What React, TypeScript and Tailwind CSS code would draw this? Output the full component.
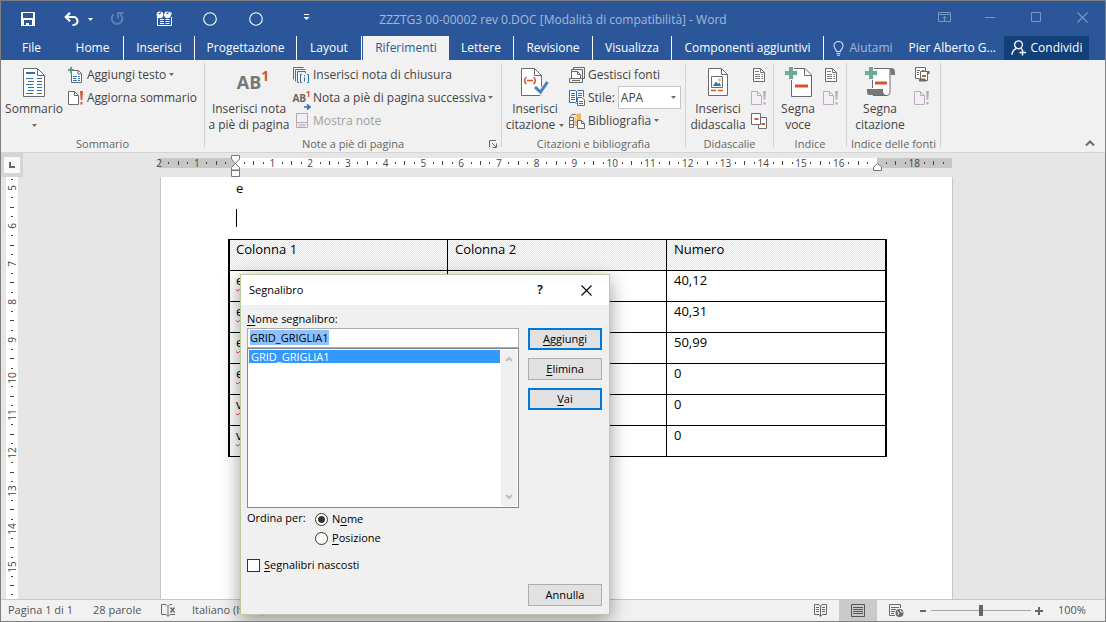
import { useEffect, useRef } from "react";
import type { ReactNode } from "react";

const GREY = "#6a6a6a";
const BLUE = "#2e6fb7";
const RED = "#d9532c";
const GREEN = "#6fa893";

function Svg({ w, h, children }: { w: number; h: number; children: ReactNode }) {
  return (
    <svg width={w} height={h} viewBox={`0 0 ${w} ${h}`} fill="none" className="block shrink-0" aria-hidden="true">
      {children}
    </svg>
  );
}

/* ---------- title bar icons ---------- */
const SaveIcon = () => (
  <Svg w={14} h={14}>
    <path fill="#fff" fillRule="evenodd" d="M0 0H14V14H0ZM2 1V6H12V1ZM3 8V13H5V11H8V13H11V8Z" />
  </Svg>
);
const UndoIcon = () => (
  <Svg w={15} h={15}>
    <path d="M2 5H9.5A3.8 3.8 0 0 1 9.500 13H8.500" stroke="#fff" strokeWidth="2.200" />
    <path d="M6 .8L1.800 5L6 9.200" stroke="#fff" strokeWidth="2.200" />
  </Svg>
);
const RedoIcon = () => (
  <Svg w={14} h={14}>
    <path d="M3.5 2.6A5.3 5.3 0 1 0 10.3 2.4" stroke="#5c81b8" strokeWidth="2" />
    <path d="M8 6.5V1H13.5" stroke="#5c81b8" strokeWidth="1.8" />
  </Svg>
);
const TableSearchIcon = () => (
  <Svg w={17} h={16}>
    <path d="M1.5 6V14.5H15.5V6" stroke="#fff" />
    <circle cx="4" cy="3.8" r="3.4" fill="#fff" />
    <circle cx="11.5" cy="3.8" r="3.4" fill="#fff" />
    <path d="M3 3L5 1.5M10.5 3L12.5 1.5" stroke="#2b579a" strokeWidth="1.2" />
    <path d="M4 8.5H8M9.5 8.5H13.5M4 10.5H8M9.5 10.5H13.5M4 12.5H8M9.5 12.5H13.5" stroke="#fff" />
    <path d="M15 1V4" stroke="#fff" />
  </Svg>
);
const CircleIcon = () => (
  <Svg w={14} h={14}>
    <circle cx="7" cy="7" r="6.3" stroke="#fff" strokeWidth="1.1" />
  </Svg>
);
const Caret = ({ color = GREY }: { color?: string }) => (
  <Svg w={5} h={3}>
    <path d="M0 0H5L2.5 3Z" fill={color} />
  </Svg>
);
const CustomizeIcon = () => (
  <Svg w={7} h={7}>
    <path d="M1 .5H6" stroke="#fff" />
    <path d="M.5 3H6.5L3.5 6Z" fill="#fff" />
  </Svg>
);
const RibbonOptionsIcon = () => (
  <Svg w={13} h={10}>
    <path d="M.5 .5H12.5V9.5H.5ZM.5 2.5H12.5M6.5 9V4.5M4.5 6.5L6.5 4.5L8.5 6.5" stroke="#7897c5" />
  </Svg>
);
const MinimizeIcon = () => (
  <Svg w={10} h={10}>
    <path d="M0 5.5H10" stroke="#7897c5" />
  </Svg>
);
const MaximizeIcon = () => (
  <Svg w={10} h={10}>
    <path d="M.5 .5H9.5V9.5H.5Z" stroke="#7897c5" />
  </Svg>
);
const CloseIcon = ({ color }: { color: string }) => (
  <Svg w={11} h={11}>
    <path d="M.5 .5L10.5 10.5M10.5 .5L.5 10.5" stroke={color} strokeWidth="1.1" />
  </Svg>
);
const BulbIcon = () => (
  <Svg w={11} h={15}>
    <path d="M3.5 10.5C3.5 8.5 1 7.5 1 4.8A4.4 4.3 0 0 1 10 4.8C10 7.5 7.5 8.5 7.5 10.5ZM3.5 12.5H7.5M4 14.2H7" stroke="#d5dfee" strokeWidth="1.1" />
  </Svg>
);
const ShareIcon = () => (
  <Svg w={16} h={16}>
    <circle cx="7.5" cy="4.8" r="3.9" stroke="#fff" strokeWidth="1.4" />
    <path d="M1 14.8C1 11.5 2.8 9.8 5 8.6M10 8.4L11 9.4M11.5 9.5V15.5M8.5 12.5H15" stroke="#fff" strokeWidth="1.4" />
  </Svg>
);

/* ---------- ribbon icons ---------- */
const TocIcon = () => (
  <Svg w={22} h={29}>
    <path d="M1 .5H14.5L21.5 7.5V28.5H.5V.5Z" fill="#fff" stroke={GREY} />
    <path d="M14.5 1V7.5H21" stroke={GREY} />
    <path d="M3 5H12" stroke={BLUE} strokeWidth="2" />
    <path d="M3 10.5H10M5 13.5H11M3 16.5H10M5 19.5H11M5 22.5H11M3 25.5H10M14 10.5H19M14 13.5H19M14 16.5H19M14 19.5H19M14 22.5H19M14 25.5H19" stroke={BLUE} />
  </Svg>
);
const AddTextIcon = () => (
  <Svg w={15} h={16}>
    <path d="M3.5 3.5H10.5L13.5 6.5V15.5H3.5Z" fill="#fff" stroke={GREY} />
    <path d="M10 3.5V7H13.5" stroke={GREY} />
    <path d="M5 9.5H9M5 11.5H8M5 13.5H9M10 9.5H12M10 11.5H12M10 13.5H12" stroke={BLUE} />
    <path d="M3 0V6M0 3H6" stroke="#5c9c85" strokeWidth="2" />
  </Svg>
);
const UpdateIcon = ({ off = false }: { off?: boolean }) => (
  <Svg w={16} h={14}>
    <path d="M.5 .5H6.5L10.5 4.5V13.5H.5Z" fill={off ? "#f5eef7" : "#fff"} stroke={off ? "#b9aebb" : GREY} />
    <path d="M6.5 .5V4.5H10.5" stroke={off ? "#b9aebb" : GREY} />
    <path d="M12 0H15L14.3 9H12.7ZM12.5 11H14.5V13.5H12.5Z" fill={off ? "#b4b4b4" : RED} />
  </Svg>
);
const EndnoteIcon = () => (
  <Svg w={17} h={16}>
    <path d="M.5 12.5V.5H10.5M2.5 14.5V2.5H12.5M12.5 6.5V4.5H4.5V15.5H6" stroke={GREY} />
    <path d="M9 7.5H7.5V15.5H9M14 7.5H15.5V15.5H14" stroke={BLUE} />
    <path d="M11.5 8V9.3M11.5 10.5V14.5" stroke={BLUE} />
  </Svg>
);
const PanelIcon = () => (
  <Svg w={12} h={15}>
    <path d="M.5 .5H11.5V14.5H.5Z" fill="#f3edf5" stroke="#b3aab6" />
    <path d="M.5 9.5H11.5" stroke="#b3aab6" />
    <path d="M2.5 11.5H9.5M2.5 13H9.5" stroke="#b3aab6" strokeWidth=".8" />
  </Svg>
);
const CitationIcon = () => (
  <Svg w={28} h={28}>
    <path d="M.5 .5H13.5L20.5 7.5V27.5H.5Z" fill="#fff" stroke={GREY} />
    <path d="M13.5 .5V7.5H20.5" stroke={GREY} />
    <path d="M5.5 9C3 11 3 14 5.5 16M12.5 9C15 11 15 14 12.5 16M6 12.5H12" stroke={RED} strokeWidth="1.6" />
    <path d="M14 19.5L19.5 24.5L27 14" stroke="#f0f0f0" strokeWidth="5" />
    <path d="M14 19L19.5 24L26.5 14" stroke="#4580bf" strokeWidth="3" />
  </Svg>
);
const SourcesIcon = () => (
  <Svg w={16} h={16}>
    <path d="M4.5 2.5V.5H15.5V11.5H13.5M2.5 4.5V2.5H13.5V11.5" stroke={GREY} />
    <path d="M2.5 11.5V4.5H8.5L11.5 7.5V11.5" fill="#fff" stroke={GREY} />
    <path d="M8.5 4.5V7.5H11.5" stroke={GREY} />
    <path d="M.5 11.5H13.5V15.5H.5ZM3 13.5H11" stroke={GREY} />
  </Svg>
);
const StyleIcon = () => (
  <Svg w={16} h={16}>
    <path d="M7.5 13.5L6 12.5H.5V.5H6L7.5 1.5L9 .5H14.5V7" fill="#fff" stroke={BLUE} />
    <path d="M7.5 1.5V12" stroke={BLUE} />
    <path d="M2 3.5H6M2 5.5H6M2 7.5H6M2 9.5H6M9 3.5H13M9 5.5H13" stroke={GREY} />
    <path d="M8.5 7.5H13L15.5 10V15.5H8.5Z" fill="#fff" stroke={GREY} />
    <path d="M10 11.5H14M10 13.5H14" stroke={GREY} />
  </Svg>
);
const BooksIcon = () => (
  <Svg w={16} h={16}>
    <path d="M.5 4.5H4.5V14.5H.5ZM.5 4.5L3 1.5H6.5M.5 7.5H4M.5 11.5H4" stroke={GREY} />
    <path d="M5.5 4.5L8 .5H12V7H9V13H5.5Z" fill="#edb868" />
    <path d="M6.5 4.5H8.5M6.5 7H8" stroke="#fff" />
    <path d="M8.5 7.5H12.5L15.5 10.5V15.5H8.5Z" fill="#fff" stroke={GREY} />
    <path d="M12.5 7.5V10.5H15.5" stroke={GREY} />
  </Svg>
);
const CaptionIcon = () => (
  <Svg w={20} h={28}>
    <path d="M.5 .5H13.5L19.5 6.5V27.5H.5Z" fill="#fff" stroke={GREY} />
    <path d="M13.5 .5V6.5H19.5" stroke={GREY} />
    <path d="M3.5 8.5H14.5V19.5H3.5Z" stroke={GREY} />
    <path d="M5 18L8 13.5L10 16L11.5 14.5L13 18Z" fill={BLUE} />
    <circle cx="11.5" cy="12" r="1.4" fill="#edb868" />
    <path d="M3 22.5H8M10 22.5H15" stroke={RED} strokeWidth="1.4" />
  </Svg>
);
const ListDocIcon = () => (
  <Svg w={12} h={14}>
    <path d="M.5 .5H7.5L11.5 4.5V13.5H.5Z" fill="#fff" stroke={GREY} />
    <path d="M7.5 .5V4.5H11.5M2 3.5H6M2 6.5H7M2 8.5H7M2 10.5H7M8.5 6.5H10M8.5 8.5H10M8.5 10.5H10" stroke={GREY} strokeWidth=".9" />
  </Svg>
);
const CrossRefIcon = () => (
  <Svg w={16} h={16}>
    <path d="M.5 .5H9.5V11.5H.5Z" fill="#fff" stroke={GREY} />
    <path d="M9.5 4.5H15.5V15.5H7.5V11.5H9.5Z" fill="#fff" stroke={GREY} />
    <path d="M3.5 6H7.5M10.5 11H14" stroke={RED} strokeWidth="2" />
  </Svg>
);
const MarkEntryIcon = () => (
  <Svg w={27} h={30}>
    <path d="M6.5 1.5H20L26.5 8V29.5H6.5Z" fill="#fff" stroke={GREY} />
    <path d="M19.5 1.5V8.5H26.5" stroke={GREY} />
    <path d="M6 0V13M0 6H13" stroke="#f1f1f1" strokeWidth="6" />
    <path d="M6 0V12M0 6H12" stroke={GREEN} strokeWidth="4" />
    <path d="M10 19H23" stroke={RED} strokeWidth="3" />
  </Svg>
);
const MarkCitationIcon = () => (
  <Svg w={30} h={30}>
    <path d="M7.500 21V1.500H25V25.500Q25 28 22 28.500H8" fill="#fff" stroke={GREY} />
    <path d="M24 1H27Q30 1.500 30 5V8H25.500V4Z" fill="#777" />
    <path d="M2 22H18V24Q18 27 21 28H4Q2 28 2 25Z" fill="#777" />
    <path d="M6 0V13M0 6H13" stroke="#f1f1f1" strokeWidth="6" />
    <path d="M6 0V12M0 6H12" stroke={GREEN} strokeWidth="4" />
    <path d="M10 16H22" stroke={RED} strokeWidth="3" />
  </Svg>
);
const ScrollListIcon = () => (
  <Svg w={15} h={15}>
    <path d="M4 11.500H.5V.5H10.500V4" fill="#fff" stroke={GREY} />
    <path d="M2 3.500H5M2 5.500H4M2 7.500H4M7 3.500H9" stroke={GREY} />
    <path d="M5.500 12V4.500H12.500V13.500H7" fill="#fff" stroke={GREY} />
    <path d="M11.500 4H14.500V7H12.500ZM4 11.500H10L11.500 14.500H4Z" fill={GREY} />
    <path d="M7 9H11" stroke={RED} strokeWidth="2" />
  </Svg>
);

/* ---------- status bar icons ---------- */
const ProofIcon = () => (
  <Svg w={15} h={13}>
    <path d="M7 2.500L5 .5H.5V10.500H5L7 12.500L9 10.500H14M7 2.500V12M7 2.500L9 .5H11" stroke={GREY} />
    <path d="M9.500 3.500L13.500 8.500M13.500 3.500L9.500 8.500" stroke={GREY} strokeWidth="1.500" />
  </Svg>
);
const ReadIcon = () => (
  <Svg w={13} h={13}>
    <path d="M6.500 2.500L5 .5H.5V10.500H5L6.500 12.500L8 10.500H12.500V.5H8L6.500 2.500V12" stroke={GREY} />
    <path d="M2 3.500H5M2 5.500H5M2 7.500H5M8 3.500H11M8 5.500H11M8 7.500H11" stroke={GREY} />
  </Svg>
);
const PrintLayoutIcon = () => (
  <Svg w={14} h={13}>
    <path d="M.5 .5H13.500V12.500H.5ZM2 3.500H12M2 5.500H12M2 7.500H12M2 9.500H12" stroke="#555" />
  </Svg>
);
const WebIcon = () => (
  <Svg w={15} h={14}>
    <path d="M6 11.500H.5V.5H11.500V4M2 3.500H10M2 5.500H7M2 7.500H6M2 9.500H5" stroke={GREY} />
    <circle cx="10.500" cy="9" r="4" fill={GREY} />
    <path d="M8 7.500L10 9L9 11M11 6L12 8L14 8" stroke="#f1f1f1" />
  </Svg>
);

/* ---------- title bar ---------- */
const iconButton = "flex items-center justify-center";

function TitleBar() {
  return (
    <header className="grid h-[35px] grid-cols-[1fr_auto_1fr] items-center bg-[#2b579a]">
      <div className="flex h-full items-center pl-1">
        <button aria-label="Salva" className={`${iconButton} mr-1 h-8 w-[46px]`}><SaveIcon /></button>
        <button aria-label="Annulla digitazione" className={`${iconButton} h-8 w-8`}><UndoIcon /></button>
        <button aria-label="Altre azioni" className={`${iconButton} mr-2 h-8 w-1.5`}><Caret color="#fff" /></button>
        <button aria-label="Ripeti" className={`${iconButton} mr-2 h-8 w-8`}><RedoIcon /></button>
        <button aria-label="Cerca tabella" className={`${iconButton} h-8 w-[46px]`}><TableSearchIcon /></button>
        <button aria-label="Macro 1" className={`${iconButton} h-8 w-[46px]`}><CircleIcon /></button>
        <button aria-label="Macro 2" className={`${iconButton} h-8 w-[46px]`}><CircleIcon /></button>
        <button aria-label="Personalizza barra" className={`${iconButton} h-8 w-[54px] pb-1`}><CustomizeIcon /></button>
      </div>
      <h1 className="whitespace-nowrap pt-0.5 text-[#a5b9d8]">ZZZTG3 00-00002 rev 0.DOC [Modalità di compatibilità] - Word</h1>
      <div className="flex items-center justify-end pb-1">
        <button aria-label="Opzioni barra multifunzione" className={`${iconButton} h-8 w-[46px]`}><RibbonOptionsIcon /></button>
        <button aria-label="Riduci a icona" className={`${iconButton} h-8 w-[46px]`}><MinimizeIcon /></button>
        <button aria-label="Ingrandisci" className={`${iconButton} h-8 w-[46px]`}><MaximizeIcon /></button>
        <button aria-label="Chiudi" className={`${iconButton} h-8 w-[46px]`}><CloseIcon color="#7897c5" /></button>
      </div>
    </header>
  );
}

const tabs = [
  { name: "File", cls: "w-[61px]" },
  { name: "Home", cls: "w-[62px] border-r border-white" },
  { name: "Inserisci", cls: "w-[71px] border-r border-white" },
  { name: "Progettazione", cls: "w-[102px] border-r border-white" },
  { name: "Layout", cls: "mr-px w-[65px] border-r border-white" },
  { name: "Riferimenti", cls: "w-[86px] bg-[#f1f1f1] text-[#2b579a]" },
  { name: "Lettere", cls: "w-[65px] border-r border-white" },
  { name: "Revisione", cls: "w-[79px] border-r border-white" },
  { name: "Visualizza", cls: "w-[79px] border-r border-white" },
  { name: "Componenti aggiuntivi", cls: "w-[152px] border-r border-white" },
];

function Tabs() {
  return (
    <nav className="flex h-6 items-stretch bg-[#2b579a] text-white">
      {tabs.map((t) => (
        <button key={t.name} className={`${t.cls} shrink-0 whitespace-nowrap`}>{t.name}</button>
      ))}
      <div className="flex flex-1 items-center justify-end pr-4">
        <button className="mr-4 flex items-center gap-1.5 text-[#a5b9d8]"><BulbIcon />Aiutami</button>
        <button className="mr-2 whitespace-nowrap">Pier Alberto G...</button>
        <button className="flex h-6 w-[85px] items-center justify-center gap-1 bg-[#124078]"><ShareIcon />Condividi</button>
      </div>
    </nav>
  );
}

/* ---------- ribbon ---------- */
function Group({ label, width, launcher, children }: { label: string; width: string; launcher?: boolean; children: ReactNode }) {
  return (
    <section className={`${width} mb-[5px] mt-[3px] flex shrink-0 flex-col border-r border-[#d2d2d2]`}>
      <div className="flex h-[73px] shrink-0">{children}</div>
      <div className="-mb-[5px] flex h-4 shrink-0 items-center text-[11px] text-[#666]">
        <h2 className="flex-1 whitespace-nowrap text-center">{label}</h2>
        {launcher && (
          <button aria-label="Altre opzioni" className="-ml-3 mr-1">
            <Svg w={8} h={8}>
              <path d="M.5 7V.5H7M3 3L7 7M7.500 3.500V7.500H3.500" stroke={GREY} />
            </Svg>
          </button>
        )}
      </div>
    </section>
  );
}

function Big({ icon, lines, width, caret }: { icon: ReactNode; lines: string[]; width: string; caret?: boolean }) {
  return (
    <button className={`${width} flex shrink-0 flex-col items-center`}>
      <span className="flex h-[38px] items-center justify-center">{icon}</span>
      <span className="whitespace-nowrap leading-4">{lines[0]}</span>
      <span className="flex h-4 items-center gap-1 whitespace-nowrap leading-4">
        {lines[1]}
        {caret && <Caret />}
      </span>
    </button>
  );
}

function Small({ icon, text, caret, off }: { icon: ReactNode; text: string; caret?: boolean; off?: boolean }) {
  return (
    <button className={off ? "flex h-[23px] items-center gap-[3px] whitespace-nowrap text-[#a0a0a0]" : "flex h-[23px] items-center gap-[3px] whitespace-nowrap"}>
      <span className="flex w-[17px] justify-center">{icon}</span>
      {text}
      {caret && <Caret />}
    </button>
  );
}

function IconStack({ icons }: { icons: { name: string; icon: ReactNode }[] }) {
  return (
    <div className="flex flex-col">
      {icons.map((i) => (
        <button key={i.name} aria-label={i.name} className="flex h-[23px] w-[18px] items-center justify-center">{i.icon}</button>
      ))}
    </div>
  );
}

const FootnoteIcon = () => (
  <span className="flex items-start pl-2 text-lg font-bold leading-6 text-[#777]">
    AB<sup className="top-0 text-sm font-bold leading-3 text-[#d9532c]">1</sup>
  </span>
);
const NextFootnoteIcon = () => (
  <span className="relative flex items-start text-[10px] font-bold leading-4 text-[#666]">
    AB<sup className="top-0 text-[8px] leading-2 text-[#d9532c]">1</sup>
    <span className="absolute -bottom-1 right-0">
      <Svg w={7} h={6}>
        <path d="M0 3H5M3 .5L6 3L3 5.500" stroke={BLUE} strokeWidth="1.600" />
      </Svg>
    </span>
  </span>
);

function Ribbon() {
  return (
    <div className="flex h-[93px] border-b border-[#d5d5d5] bg-[#f1f1f1] text-[#444]">
      <Group label="Sommario" width="w-[204px]">
        <Big width="w-[66px]" icon={<TocIcon />} lines={["Sommario", ""]} caret />
        <div className="flex flex-col">
          <Small icon={<AddTextIcon />} text="Aggiungi testo" caret />
          <Small icon={<UpdateIcon />} text="Aggiorna sommario" />
        </div>
      </Group>
      <Group label="Note a piè di pagina" width="w-[297px]" launcher>
        <Big width="w-[88px]" icon={<FootnoteIcon />} lines={["Inserisci nota", "a piè di pagina"]} />
        <div className="flex flex-1 flex-col">
          <Small icon={<EndnoteIcon />} text="Inserisci nota di chiusura" />
          <div className="flex justify-between pr-2">
            <Small icon={<NextFootnoteIcon />} text="Nota a piè di pagina successiva" />
            <button aria-label="Altre note"><Caret /></button>
          </div>
          <Small icon={<PanelIcon />} text="Mostra note" off />
        </div>
      </Group>
      <Group label="Citazioni e bibliografia" width="w-[184px]">
        <Big width="w-[66px]" icon={<CitationIcon />} lines={["Inserisci", "citazione"]} caret />
        <div className="flex flex-col">
          <Small icon={<SourcesIcon />} text="Gestisci fonti" />
          <div className="flex h-[23px] items-center">
            <label htmlFor="stile" className="flex items-center gap-[3px]">
              <span className="flex w-[17px] justify-center"><StyleIcon /></span>
              Stile:
            </label>
            <span className="ml-[3px] grid h-[23px] w-[63px] items-center border border-[#c6c6c6] bg-white">
              <select id="stile" className="col-start-1 row-start-1 h-full w-full appearance-none bg-transparent pl-0.5">
                <option>APA</option>
              </select>
              <span className="pointer-events-none col-start-1 row-start-1 mr-1 justify-self-end"><Caret /></span>
            </span>
          </div>
          <Small icon={<BooksIcon />} text="Bibliografia" caret />
        </div>
      </Group>
      <Group label="Didascalie" width="w-[88px]">
        <Big width="w-[64px]" icon={<CaptionIcon />} lines={["Inserisci", "didascalia"]} />
        <IconStack icons={[{ name: "Indice figure", icon: <ListDocIcon /> }, { name: "Aggiorna tabella", icon: <UpdateIcon off /> }, { name: "Riferimento incrociato", icon: <CrossRefIcon /> }]} />
      </Group>
      <Group label="Indice" width="w-[73px]">
        <Big width="w-[48px]" icon={<MarkEntryIcon />} lines={["Segna", "voce"]} />
        <IconStack icons={[{ name: "Inserisci indice", icon: <ListDocIcon /> }, { name: "Aggiorna indice", icon: <UpdateIcon off /> }]} />
      </Group>
      <Group label="Indice delle fonti" width="w-[94px]">
        <Big width="w-[66px]" icon={<MarkCitationIcon />} lines={["Segna", "citazione"]} />
        <IconStack icons={[{ name: "Inserisci indice delle fonti", icon: <ScrollListIcon /> }, { name: "Aggiorna indice delle fonti", icon: <UpdateIcon off /> }]} />
      </Group>
      <div className="flex flex-1 items-end justify-end pb-1.5 pr-2.5">
        <button aria-label="Comprimi la barra multifunzione">
          <Svg w={10} h={6}>
            <path d="M1 5.500L5 1.500L9 5.500" stroke={GREY} strokeWidth="2" />
          </Svg>
        </button>
      </div>
    </div>
  );
}

/* ---------- rulers ---------- */
const hCells = Array.from({ length: 21 }, (_, i) => {
  const n = Math.abs(i - 2);
  return { i, label: n === 0 || n === 17 ? "" : String(n), margin: i < 2 || i > 18 };
});

const LeftIndent = () => (
  <Svg w={9} h={22}>
    <path d="M.5 .5H8.500V4L4.500 8.500L.5 4ZM.5 15V12.500L4.500 8.500L8.500 12.500V15ZM.5 15.500H8.500V21.500H.5Z" fill="#fff" stroke="#777" />
  </Svg>
);
const RightIndent = () => (
  <Svg w={9} h={8}>
    <path d="M.5 7.500V4L4.500 .5L8.500 4V7.500Z" fill="#fff" stroke="#777" />
  </Svg>
);

function HorizontalRuler() {
  return (
    <div className="flex h-6 justify-center pr-3 pt-[5px]">
      <div className="flex h-2.5 w-[793px] text-[10px] leading-[10px] text-[#444]">
        {hCells.map((c) => (
          <div key={c.i} className={c.margin ? "grid flex-1 grid-cols-4 items-center bg-[#c6c6c6]" : "grid flex-1 grid-cols-4 items-center bg-white"}>
            <span className="relative flex w-0 justify-center">
              {c.label}
              {c.i === 2 && <span className="absolute -left-1 -top-2"><LeftIndent /></span>}
              {c.i === 19 && <span className="absolute -left-1 top-0"><RightIndent /></span>}
            </span>
            <span className="h-0.5 w-px bg-[#444]" />
            <span className="h-1 w-px bg-[#444]" />
            <span className="h-0.5 w-px bg-[#444]" />
          </div>
        ))}
      </div>
    </div>
  );
}

const vMarks = Array.from({ length: 45 }, (_, i) => {
  const phase = (i + 3) % 4;
  return { i, kind: phase === 0 ? "label" : phase === 2 ? "bar" : "dot", label: 5 + Math.floor((i - 1) / 4) };
});

function VerticalRuler() {
  return (
    <div className="ml-[5px] flex w-3 flex-col justify-between bg-white pb-1 pt-0.5 text-[10px] text-[#444]">
      {vMarks.map((m) => (
        <span key={m.i} className="flex h-0 items-center justify-center">
          {m.kind === "label" && <span className="-rotate-90 leading-3">{m.label}</span>}
          {m.kind === "bar" && <span className="h-px w-1 shrink-0 bg-[#444]" />}
          {m.kind === "dot" && <span className="h-px w-0.5 shrink-0 bg-[#444]" />}
        </span>
      ))}
    </div>
  );
}

/* ---------- document ---------- */
const rows = [
  ["e", "40,12"],
  ["e", "40,31"],
  ["e", "50,99"],
  ["e", "0"],
  ["v", "0"],
  ["v", "0"],
];
/* A one-pixel yellow and white dither; oddDither shifts it so that it runs on across the column borders. */
const th = "h-[31px] border-t border-black bg-[repeating-conic-gradient(#ffff00_0_25%,#ffffff_0_50%)] bg-[length:2px_2px] text-left align-top font-normal leading-[18px]";
const oddDither = "bg-[position:1px_0px]";
const td = "h-[31px] border-t border-black align-top leading-[18px]";

function Page() {
  return (
    <main className="flex flex-1 justify-center pr-2.5">
      <article className="w-[793px] border-x border-[#c6c6c6] bg-white pl-[67px] text-[13px] text-black">
        <p className="pl-2 pt-px leading-5">e</p>
        <div className="ml-2 mt-[11px] h-[18px] w-px bg-black" />
        <table className="mt-3 w-[659px] table-fixed border-separate border-spacing-0 border-x-2 border-b border-black">
          <thead>
            <tr>
              <th className={`${th} w-[217px] pl-1.5`}>Colonna 1</th>
              <th className={`${th} w-[219px] border-l pl-[7px]`}>Colonna 2</th>
              <th className={`${th} ${oddDither} border-l pl-[7px]`}>Numero</th>
            </tr>
          </thead>
          <tbody>
            {rows.map(([a, b], i) => (
              <tr key={i}>
                <td className={`${td} pl-1.5`}>
                  <span className="underline decoration-red-500 decoration-wavy decoration-1 underline-offset-2">{a}</span>
                </td>
                <td className={`${td} border-l`} />
                <td className={`${td} border-l pl-[7px]`}>{b}</td>
              </tr>
            ))}
          </tbody>
        </table>
      </article>
    </main>
  );
}

/* ---------- dialog ---------- */
const U = ({ children }: { children: ReactNode }) => <span className="underline underline-offset-2">{children}</span>;
const buttonBase = "flex h-[22px] w-[74px] items-center justify-center bg-[#e1e1e1]";

function Chevron({ down }: { down?: boolean }) {
  return (
    <Svg w={8} h={6}>
      <path d={down ? "M1 1L4 4L7 1" : "M1 5L4 2L7 5"} stroke="#bdbdbd" strokeWidth="2" />
    </Svg>
  );
}

function BookmarkDialog() {
  const name = useRef<HTMLInputElement>(null);
  useEffect(() => {
    name.current?.focus({ preventScroll: true });
    name.current?.select();
  }, []);
  return (
    <div role="dialog" aria-labelledby="dlg-title" className="absolute left-[239px] top-[273px] w-[370px] border border-[#bccb9c] bg-[#f0f0f0] text-[11px] text-black shadow-[0_5px_18px_rgba(0,0,0,0.4)]">
      <div className="flex h-[30px] items-center bg-white pl-2">
        <h2 id="dlg-title" className="flex-1 text-[11px]">Segnalibro</h2>
        <button aria-label="Guida" className="flex h-full w-[46px] items-center justify-center text-[13px] font-semibold">?</button>
        <button aria-label="Chiudi finestra" className="flex h-full w-[46px] items-center justify-center"><CloseIcon color="#000" /></button>
      </div>
      <div className="pb-2 pl-1.5 pr-[7px] pt-1.5">
        <label htmlFor="bm" className="block h-[17px] leading-4"><U>N</U>ome segnalibro:</label>
        <div className="flex gap-[9px]">
          <div className="flex-1">
            <input
              id="bm"
              ref={name}
              defaultValue="GRID_GRIGLIA1"
              className="block h-5 w-full border border-[#ababab] bg-white px-0.5 pb-0.5 leading-4 caret-transparent outline-none selection:bg-[#8cc0ff] selection:text-black"
            />
            <div className="flex h-40 border border-[#828790] bg-white p-px">
              <ul role="listbox" aria-label="Segnalibri" className="flex-1">
                <li role="option" aria-selected="true" className="h-[13px] bg-[#3399ff] pl-0.5 leading-[13px] text-white">GRID_GRIGLIA1</li>
              </ul>
              <div className="ml-px flex w-4 flex-col items-center justify-between bg-[#f0f0f0] py-1.5">
                <Chevron />
                <Chevron down />
              </div>
            </div>
          </div>
          <div className="flex flex-col gap-2">
            <button className={`${buttonBase} border-2 border-[#0078d7]`}><span><U>A</U>ggiungi</span></button>
            <button className={`${buttonBase} border border-[#adadad]`}><span><U>E</U>limina</span></button>
            <button className={`${buttonBase} border-2 border-[#0078d7]`}><span><U>V</U>ai</span></button>
          </div>
        </div>
        <div role="radiogroup" aria-labelledby="ord-label" className="mt-0.5 flex">
          <span id="ord-label" className="w-[68px] leading-4">Ordina per:</span>
          <div className="flex flex-col">
            <label className="flex h-[19px] items-center gap-1">
              <input type="radio" name="ord" defaultChecked className="h-[13px] w-[13px] appearance-none rounded-full border border-[#333] bg-white checked:bg-[radial-gradient(#333_0_3px,#fff_4px)]" />
              <span>N<U>o</U>me</span>
            </label>
            <label className="flex h-[19px] items-center gap-1">
              <input type="radio" name="ord" className="h-[13px] w-[13px] appearance-none rounded-full border border-[#333] bg-white" />
              <span><U>P</U>osizione</span>
            </label>
          </div>
        </div>
        <label className="mt-2 flex h-[19px] items-center gap-1">
          <input type="checkbox" className="h-[13px] w-[13px] appearance-none border border-[#333] bg-white" />
          <span><U>S</U>egnalibri nascosti</span>
        </label>
        <div className="mt-[9px] flex justify-end">
          <button className={`${buttonBase} border border-[#adadad]`}>Annulla</button>
        </div>
      </div>
    </div>
  );
}

function StatusBar() {
  return (
    <footer className="flex h-[22px] items-center border-t border-[#c6c6c6] bg-[#f1f1f1] pl-[7px] text-[11px] text-[#555]">
      <span className="w-[85px] whitespace-nowrap">Pagina 1 di 1</span>
      <span className="w-[68px] whitespace-nowrap">28 parole</span>
      <button aria-label="Controllo ortografia" className="w-[31px]"><ProofIcon /></button>
      <span className="flex-1">Italiano (Italia)</span>
      <button aria-label="Lettura" className="flex h-full w-[38px] items-center justify-center"><ReadIcon /></button>
      <button aria-label="Layout di stampa" className="flex h-full w-[38px] items-center justify-center bg-[#cacaca]"><PrintLayoutIcon /></button>
      <button aria-label="Layout Web" className="flex h-full w-[38px] items-center justify-center"><WebIcon /></button>
      <button aria-label="Zoom indietro" className="ml-[5px] flex h-4 w-[6px] items-center"><span className="h-0.5 w-1.5 bg-[#666]" /></button>
      <input
        type="range"
        aria-label="Zoom"
        min={0}
        max={100}
        defaultValue={50}
        className="ml-[5px] h-3 w-[100px] appearance-none bg-[linear-gradient(#a6a6a6,#a6a6a6)] bg-[length:100%_1px] bg-center bg-no-repeat [&::-webkit-slider-thumb]:h-[11px] [&::-webkit-slider-thumb]:w-1 [&::-webkit-slider-thumb]:appearance-none [&::-webkit-slider-thumb]:bg-[#666]"
      />
      <button aria-label="Zoom avanti" className="ml-1">
        <Svg w={8} h={8}>
          <path d="M4 0V8M0 4H8" stroke="#666" strokeWidth="2" />
        </Svg>
      </button>
      <span className="w-[62px] pl-[15px]">100%</span>
    </footer>
  );
}

export default function App() {
  return (
    <div className="relative flex min-h-screen flex-col overflow-hidden border border-[#7f7f7f] bg-[#e6e6e6] font-['Open_Sans','Noto_Sans',sans-serif] text-xs">
      <TitleBar />
      <Tabs />
      <Ribbon />
      <div className="flex flex-1">
        <div className="flex w-[17px] flex-col">
          <div className="flex h-6 w-[22px] items-center justify-center bg-[#d5d5d5]">
            <button aria-label="Tabulazione" className="flex h-4 w-4 items-center justify-center bg-[#f8f8f8]">
              <span className="h-1.5 w-1.5 border-b-2 border-l-2 border-[#666]" />
            </button>
          </div>
          <div className="flex flex-1"><VerticalRuler /></div>
        </div>
        <div className="flex flex-1 flex-col">
          <HorizontalRuler />
          <Page />
        </div>
      </div>
      <StatusBar />
      <BookmarkDialog />
    </div>
  );
}
